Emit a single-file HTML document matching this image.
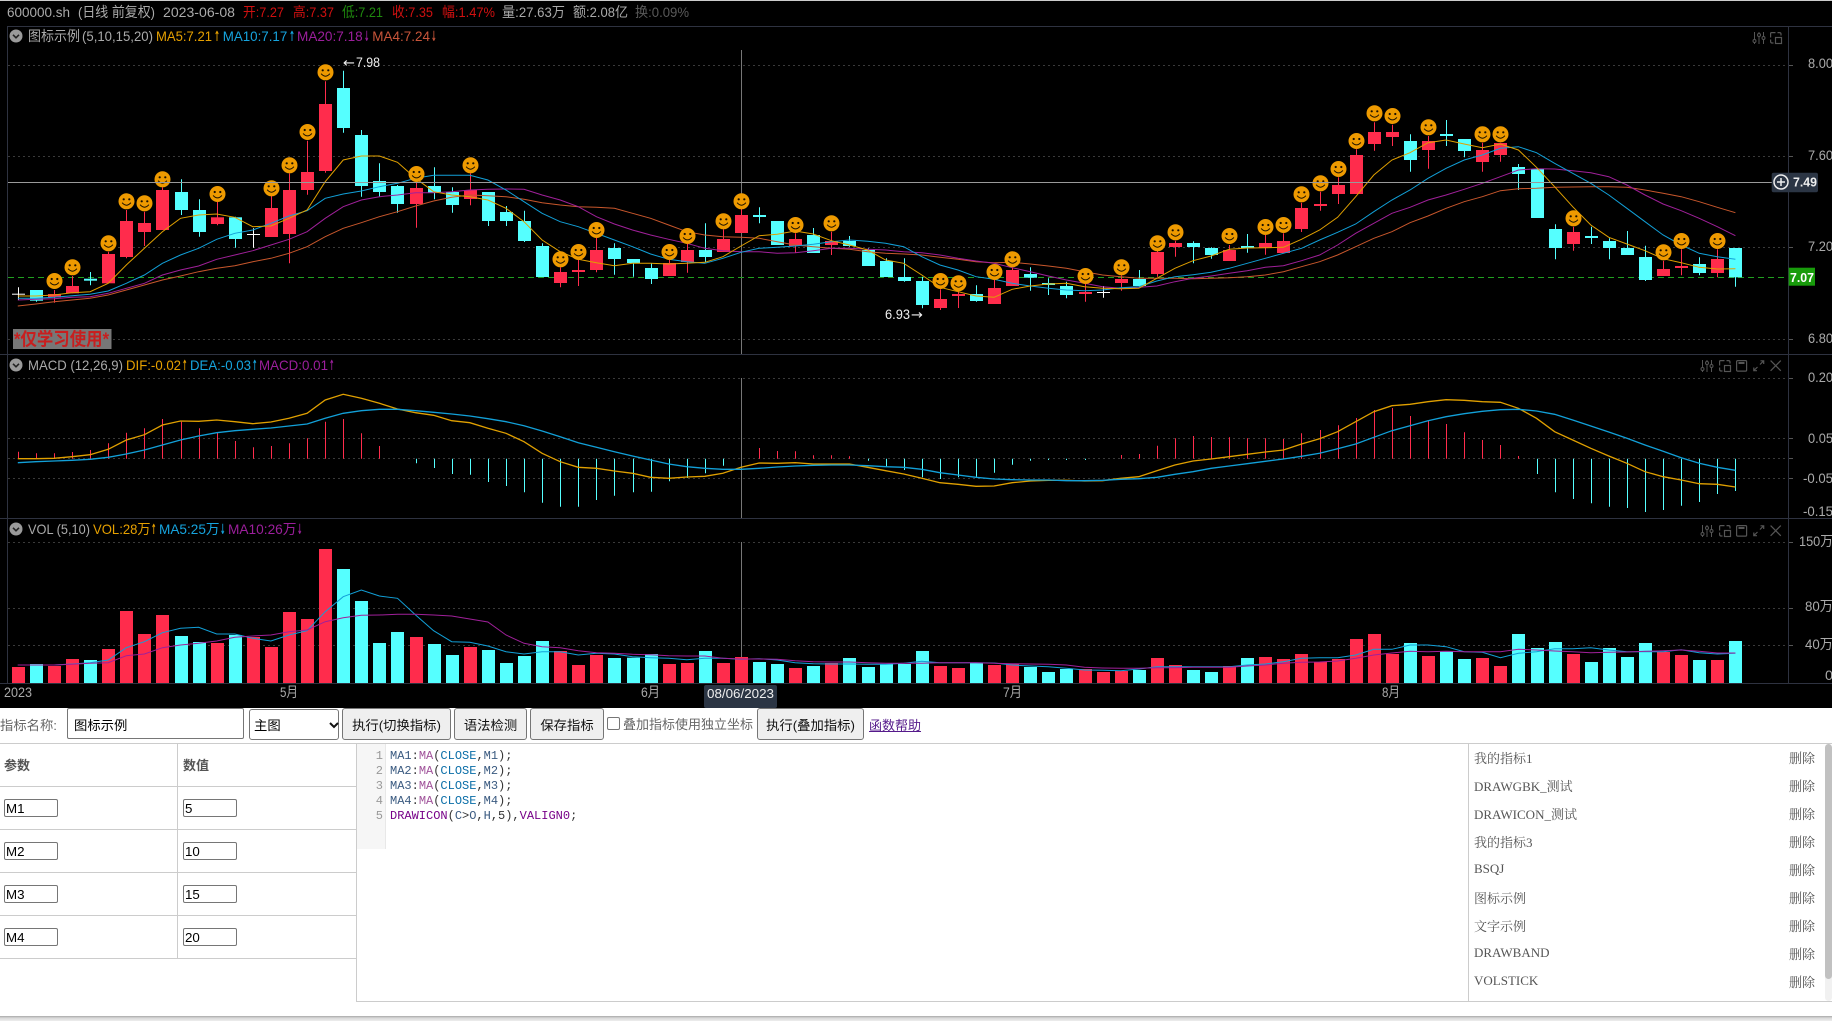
<!DOCTYPE html>
<html lang="zh"><head><meta charset="utf-8"><title>600000.sh</title>
<style>
html,body{margin:0;padding:0;background:#fff}
body{position:relative;width:1832px;height:1021px;overflow:hidden;font-family:"Liberation Sans","Noto Sans CJK SC",sans-serif;font-size:13.33px}
svg#c{position:absolute;left:0;top:0;display:block;background:#000}
svg text{font-family:"Liberation Sans","Noto Sans CJK SC",sans-serif;font-size:14px;fill:#aaa}
svg text.ar{font-family:"DejaVu Sans",sans-serif;font-weight:700;font-size:14px}
.a{position:absolute;box-sizing:border-box;white-space:nowrap}
.l{color:#666;line-height:20px}
button.a{background:#efefef;border:1px solid #767676;border-radius:3px;color:#111;font:13.33px "Liberation Sans","Noto Sans CJK SC",sans-serif;padding:1px 0 0;text-align:center}
input.a{border:1px solid #767676;border-radius:2px;background:#fff;color:#000;font:13.33px "Liberation Sans","Noto Sans CJK SC",sans-serif;padding:0 1px;margin:0;outline:0}
.sel{border:1px solid #767676;border-radius:3px;background:#fff;color:#000;line-height:29px;padding-left:4px}
.hl{background:#ccc;height:1px}
.vl{background:#ccc;width:1px}
.th{color:#555;font-weight:700;font-size:13px;line-height:20px}
.code{font:12px/15px "Liberation Mono",monospace;color:#333;height:15px}
.num{font:12px/15px "Liberation Mono",monospace;color:#999;width:14px;text-align:right}
.v{color:#3a5a80}.f{color:#a0529a}.b{color:#0a6ea8}.p{color:#3f7a5a}.d{color:#708}
.li{font:13px/18px "Liberation Serif","Noto Serif CJK SC",serif;color:#555}
</style></head><body>
<svg id="c" xmlns="http://www.w3.org/2000/svg" width="1832" height="708" viewBox="0 0 1832 708">
<defs>
<g id="i1" fill="none" stroke="#555" stroke-width="1"><path d="M1.5 0v12M6 0v12M10.5 0v12"/><circle cx="1.5" cy="9" r="1.5" fill="#000"/><circle cx="6" cy="3" r="1.5" fill="#000"/><circle cx="10.5" cy="6" r="1.5" fill="#000"/></g>
<g id="i2" fill="none" stroke="#555" stroke-width="1.2"><path d="M5.5 .6H1.6Q.6 .6 .6 1.6V5.5M.6 7.5V9.4Q.6 11 2 11H3.5M7.5 .6H9.4Q11 .6 11 2V3.5"/><rect x="5.5" y="5.5" width="6" height="6"/></g>
<g id="i3" fill="none" stroke="#555" stroke-width="1.2"><rect x=".6" y=".6" width="10" height="10.5" rx="1"/><path d="M2.5 3h6" stroke-width="2"/></g>
<g id="i4" fill="none" stroke="#555" stroke-width="1.2"><path d="M.8 10.6L4.5 7M7 4.5L10.6 .8M7.5 .8h3.2v3.2M.8 7.5v3.2H4"/></g>
<g id="i5" fill="none" stroke="#555" stroke-width="1.2"><path d="M.6 .6L10.8 10.8M10.8 .6L.6 10.8"/></g>
<g id="chev"><circle r="6.5" fill="#9a9a9a"/><path d="M-3-1.2L0 1.8L3-1.2" fill="none" stroke="#222" stroke-width="1.6"/></g>
<g id="sm"><circle r="8" fill="#ee9a00"/><circle cx="-2.8" cy="-2" r="1.1" fill="#1a1000"/><circle cx="2.8" cy="-2" r="1.1" fill="#1a1000"/><path d="M-4.4 1.4Q0 6.4 4.4 1.4" fill="none" stroke="#1a1000" stroke-width="1"/></g>
</defs>
<rect x="0" y="0" width="1832" height="1" fill="#ccc"/>
<g id="grid"></g>
<g id="plot"></g>

<text x="7" y="17" textLength="63" lengthAdjust="spacingAndGlyphs">600000.sh</text>
<text x="78" y="17" textLength="77" lengthAdjust="spacingAndGlyphs">(日线 前复权)</text>
<text x="163" y="17" textLength="72" lengthAdjust="spacingAndGlyphs">2023-06-08</text>
<text x="243" y="17" textLength="41" lengthAdjust="spacingAndGlyphs" style="fill:#d01010">开:7.27</text>
<text x="293" y="17" textLength="41" lengthAdjust="spacingAndGlyphs" style="fill:#d01010">高:7.37</text>
<text x="342" y="17" textLength="41" lengthAdjust="spacingAndGlyphs" style="fill:#1f8a0e">低:7.21</text>
<text x="392" y="17" textLength="41" lengthAdjust="spacingAndGlyphs" style="fill:#d01010">收:7.35</text>
<text x="442" y="17" textLength="53" lengthAdjust="spacingAndGlyphs" style="fill:#d01010">幅:1.47%</text>
<text x="502" y="17" textLength="63" lengthAdjust="spacingAndGlyphs">量:27.63万</text>
<text x="573" y="17" textLength="55" lengthAdjust="spacingAndGlyphs">额:2.08亿</text>
<text x="635" y="17" textLength="54" lengthAdjust="spacingAndGlyphs" style="fill:#5a5a5a">换:0.09%</text>

<use href="#chev" x="16" y="36"/>
<text x="28" y="41" textLength="52" lengthAdjust="spacingAndGlyphs">图标示例</text>
<text x="82" y="41" textLength="71" lengthAdjust="spacingAndGlyphs">(5,10,15,20)</text>
<text x="156" y="41" textLength="56" lengthAdjust="spacingAndGlyphs" style="fill:#e6a000">MA5:7.21</text><text class="ar" x="214" y="41" textLength="6" lengthAdjust="spacingAndGlyphs" style="fill:#e6a000">↑</text>
<text x="222.7" y="41" textLength="64.6" lengthAdjust="spacingAndGlyphs" style="fill:#16a4de">MA10:7.17</text><text class="ar" x="289" y="41" textLength="6" lengthAdjust="spacingAndGlyphs" style="fill:#16a4de">↑</text>
<text x="297" y="41" textLength="65.7" lengthAdjust="spacingAndGlyphs" style="fill:#9c1f9c">MA20:7.18</text><text class="ar" x="364" y="41" textLength="5.5" lengthAdjust="spacingAndGlyphs" style="fill:#9c1f9c">↓</text>
<text x="372.3" y="41" textLength="57.7" lengthAdjust="spacingAndGlyphs" style="fill:#c8553a">MA4:7.24</text><text class="ar" x="431" y="41" textLength="5.7" lengthAdjust="spacingAndGlyphs" style="fill:#c8553a">↓</text>

<use href="#i1" x="1753" y="32"/><use href="#i2" x="1770" y="32"/>
<use href="#i1" x="1701" y="360"/><use href="#i2" x="1719" y="360"/><use href="#i3" x="1736" y="360"/><use href="#i4" x="1753" y="360"/><use href="#i5" x="1770" y="360"/>
<use href="#i1" x="1701" y="525"/><use href="#i2" x="1719" y="525"/><use href="#i3" x="1736" y="525"/><use href="#i4" x="1753" y="525"/><use href="#i5" x="1770" y="525"/>

<text class="ar" x="343" y="67" textLength="12" lengthAdjust="spacingAndGlyphs" style="fill:#eee;font-weight:400;font-size:13px">←</text><text x="356" y="67" textLength="24" lengthAdjust="spacingAndGlyphs" style="fill:#eee;font-size:13.5px">7.98</text>
<text x="885" y="319" textLength="25" lengthAdjust="spacingAndGlyphs" style="fill:#eee;font-size:13.5px">6.93</text><text class="ar" x="911" y="319" textLength="12" lengthAdjust="spacingAndGlyphs" style="fill:#eee;font-weight:400;font-size:13px">→</text>

<rect x="13" y="329" width="98.5" height="20" fill="#777"/>
<text x="14" y="345.5" textLength="95" lengthAdjust="spacingAndGlyphs" style="fill:#c81e1e;font-size:18px;font-weight:700">*仅学习使用*</text>

<use href="#chev" x="16" y="365"/>
<text x="28" y="370" textLength="95" lengthAdjust="spacingAndGlyphs">MACD (12,26,9)</text>
<text x="126" y="370" textLength="55" lengthAdjust="spacingAndGlyphs" style="fill:#e6a000">DIF:-0.02</text><text class="ar" x="182" y="370" textLength="5.5" lengthAdjust="spacingAndGlyphs" style="fill:#e6a000">↑</text>
<text x="190" y="370" textLength="61" lengthAdjust="spacingAndGlyphs" style="fill:#16a4de">DEA:-0.03</text><text class="ar" x="252" y="370" textLength="5.5" lengthAdjust="spacingAndGlyphs" style="fill:#16a4de">↑</text>
<text x="259" y="370" textLength="69" lengthAdjust="spacingAndGlyphs" style="fill:#9c1f9c">MACD:0.01</text><text class="ar" x="329" y="370" textLength="5.5" lengthAdjust="spacingAndGlyphs" style="fill:#9c1f9c">↑</text>

<use href="#chev" x="16" y="529"/>
<text x="28" y="534" textLength="62" lengthAdjust="spacingAndGlyphs">VOL (5,10)</text>
<text x="93" y="534" textLength="57.5" lengthAdjust="spacingAndGlyphs" style="fill:#e6a000">VOL:28万</text><text class="ar" x="151" y="534" textLength="5.5" lengthAdjust="spacingAndGlyphs" style="fill:#e6a000">↑</text>
<text x="159" y="534" textLength="60.5" lengthAdjust="spacingAndGlyphs" style="fill:#16a4de">MA5:25万</text><text class="ar" x="220" y="534" textLength="5.5" lengthAdjust="spacingAndGlyphs" style="fill:#16a4de">↓</text>
<text x="228" y="534" textLength="68.5" lengthAdjust="spacingAndGlyphs" style="fill:#9c1f9c">MA10:26万</text><text class="ar" x="297" y="534" textLength="5.5" lengthAdjust="spacingAndGlyphs" style="fill:#9c1f9c">↓</text>

<text x="1808" y="68" textLength="25" lengthAdjust="spacingAndGlyphs">8.00</text>
<text x="1808" y="160" textLength="25" lengthAdjust="spacingAndGlyphs">7.60</text>
<text x="1808" y="251" textLength="25" lengthAdjust="spacingAndGlyphs">7.20</text>
<text x="1808" y="343" textLength="25" lengthAdjust="spacingAndGlyphs">6.80</text>
<text x="1808" y="382" textLength="25" lengthAdjust="spacingAndGlyphs">0.20</text>
<text x="1808" y="443" textLength="25" lengthAdjust="spacingAndGlyphs">0.05</text>
<text x="1803" y="483" textLength="30" lengthAdjust="spacingAndGlyphs">-0.05</text>
<text x="1803" y="516" textLength="30" lengthAdjust="spacingAndGlyphs">-0.15</text>
<text x="1799" y="546" textLength="34" lengthAdjust="spacingAndGlyphs">150万</text>
<text x="1805" y="611" textLength="28" lengthAdjust="spacingAndGlyphs">80万</text>
<text x="1805" y="649" textLength="28" lengthAdjust="spacingAndGlyphs">40万</text>
<text x="1825" y="680" textLength="8" lengthAdjust="spacingAndGlyphs">0</text>

<rect x="1771.7" y="172.7" width="46.3" height="19.5" rx="2" fill="#2b3544"/>
<circle cx="1781" cy="182" r="7" fill="none" stroke="#eee" stroke-width="1.5"/>
<path d="M1777 182h8M1781 178v8" stroke="#eee" stroke-width="1.5"/>
<text x="1793" y="186.5" textLength="24" lengthAdjust="spacingAndGlyphs" style="fill:#eee;font-weight:700;font-size:13px">7.49</text>
<rect x="1788.7" y="267.7" width="26.3" height="18" fill="#189b0b"/>
<text x="1790" y="282" textLength="24" lengthAdjust="spacingAndGlyphs" style="fill:#fff;font-weight:700;font-size:13px">7.07</text>

<text x="4" y="697" textLength="28" lengthAdjust="spacingAndGlyphs">2023</text>
<text x="280" y="697" textLength="18" lengthAdjust="spacingAndGlyphs">5月</text>
<text x="641" y="697" textLength="19" lengthAdjust="spacingAndGlyphs">6月</text>
<text x="1003" y="697" textLength="19" lengthAdjust="spacingAndGlyphs">7月</text>
<text x="1382" y="697" textLength="18" lengthAdjust="spacingAndGlyphs">8月</text>
<rect x="704" y="685" width="73" height="23" rx="2" fill="#2b3544"/>
<text x="707" y="698" textLength="67" lengthAdjust="spacingAndGlyphs" style="fill:#eee;font-size:13px">08/06/2023</text>
</svg>

<div class="a l" style="left:0;top:716px;width:60px;overflow:hidden">指标名称:</div>
<input class="a" style="left:67px;top:708px;width:177px;height:31px;padding:2px 0 0 6px" value="图标示例">
<div class="a sel" style="left:249px;top:709px;width:90px;height:31px;padding-top:1px">主图<svg style="position:absolute;left:79px;top:12px" width="10" height="7"><path d="M1 1L5 5L9 1" fill="none" stroke="#111" stroke-width="2"/></svg></div>
<button class="a" style="left:342px;top:708px;width:109px;height:32px">执行(切换指标)</button>
<button class="a" style="left:454px;top:708px;width:73px;height:32px">语法检测</button>
<button class="a" style="left:530px;top:708px;width:74px;height:32px">保存指标</button>
<div class="a" style="left:607px;top:717px;width:13px;height:13px;border:1px solid #767676;border-radius:2px;background:#fff"></div>
<div class="a l" style="left:623px;top:715px;width:132px;font-size:13px">叠加指标使用独立坐标</div>
<button class="a" style="left:757px;top:708px;width:107px;height:32px">执行(叠加指标)</button>
<a class="a" style="left:869px;top:716px;line-height:20px;color:#551a8b;text-decoration:underline;font-size:13px">函数帮助</a>

<div class="a hl" style="left:0;top:743px;width:1832px"></div>
<div class="a vl" style="left:177px;top:743px;height:216px"></div>
<div class="a vl" style="left:356px;top:743px;height:259px"></div>
<div class="a hl" style="left:0;top:786px;width:356px"></div>
<div class="a hl" style="left:0;top:829px;width:356px"></div>
<div class="a hl" style="left:0;top:872px;width:356px"></div>
<div class="a hl" style="left:0;top:915px;width:356px"></div>
<div class="a hl" style="left:0;top:958px;width:356px"></div>
<div class="a th" style="left:4px;top:756px">参数</div>
<div class="a th" style="left:183px;top:756px">数值</div>
<input class="a" style="left:4px;top:799px;width:54px;height:18px" value="M1"><input class="a" style="left:183px;top:799px;width:54px;height:18px" value="5">
<input class="a" style="left:4px;top:842px;width:54px;height:18px" value="M2"><input class="a" style="left:183px;top:842px;width:54px;height:18px" value="10">
<input class="a" style="left:4px;top:885px;width:54px;height:18px" value="M3"><input class="a" style="left:183px;top:885px;width:54px;height:18px" value="15">
<input class="a" style="left:4px;top:928px;width:54px;height:18px" value="M4"><input class="a" style="left:183px;top:928px;width:54px;height:18px" value="20">

<div class="a" style="left:357px;top:744px;width:29px;height:105px;background:#f6f6f6;border-right:1px solid #e8e8e8"></div>
<div class="a num" style="left:369px;top:749px">1</div><div class="a num" style="left:369px;top:764px">2</div><div class="a num" style="left:369px;top:779px">3</div><div class="a num" style="left:369px;top:794px">4</div><div class="a num" style="left:369px;top:809px">5</div>
<div class="a code" style="left:390px;top:749px"><span class="v">MA1</span>:<span class="f">MA</span>(<span class="b">CLOSE</span>,<span class="v">M1</span>);</div>
<div class="a code" style="left:390px;top:764px"><span class="v">MA2</span>:<span class="f">MA</span>(<span class="b">CLOSE</span>,<span class="v">M2</span>);</div>
<div class="a code" style="left:390px;top:779px"><span class="v">MA3</span>:<span class="f">MA</span>(<span class="b">CLOSE</span>,<span class="v">M3</span>);</div>
<div class="a code" style="left:390px;top:794px"><span class="v">MA4</span>:<span class="f">MA</span>(<span class="b">CLOSE</span>,<span class="v">M4</span>);</div>
<div class="a code" style="left:390px;top:809px"><span class="d">DRAWICON</span>(<span class="v">C</span>&gt;<span class="v">O</span>,<span class="v">H</span>,5),<span class="d">VALIGN0</span>;</div>

<div class="a vl" style="left:1468px;top:743px;height:259px"></div>
<div class="a hl" style="left:356px;top:1001px;width:1476px"></div>
<div class="a" style="left:1825px;top:744px;width:7px;height:257px;background:#f1f1f1;border-radius:4px"></div>
<div class="a" style="left:1825px;top:744px;width:7px;height:235px;background:#c1c1c1;border-radius:4px"></div>

<div class="a li" style="left:1474px;top:750px">我的指标1</div><div class="a li" style="left:1789px;top:750px">删除</div>
<div class="a li" style="left:1474px;top:778px">DRAWGBK_测试</div><div class="a li" style="left:1789px;top:778px">删除</div>
<div class="a li" style="left:1474px;top:806px">DRAWICON_测试</div><div class="a li" style="left:1789px;top:806px">删除</div>
<div class="a li" style="left:1474px;top:834px">我的指标3</div><div class="a li" style="left:1789px;top:834px">删除</div>
<div class="a li" style="left:1474px;top:860px">BSQJ</div><div class="a li" style="left:1789px;top:862px">删除</div>
<div class="a li" style="left:1474px;top:890px">图标示例</div><div class="a li" style="left:1789px;top:890px">删除</div>
<div class="a li" style="left:1474px;top:918px">文字示例</div><div class="a li" style="left:1789px;top:918px">删除</div>
<div class="a li" style="left:1474px;top:944px">DRAWBAND</div><div class="a li" style="left:1789px;top:946px">删除</div>
<div class="a li" style="left:1474px;top:972px">VOLSTICK</div><div class="a li" style="left:1789px;top:974px">删除</div>

<div class="a" style="left:0;top:1016px;width:1832px;height:5px;background:linear-gradient(#a8a8a8,#d8d8d8 40%,#eee)"></div>

<script>
var C=[
['w',881,883,862,900,0],['c',870,902,870,905,0],['r',882,892,870,908,843],['r',858,880,828,880,802],['c',836,842,816,856,0],['r',762,850,755,850,730],['r',663,771,630,775,604],['r',669,696,635,738,610],['r',570,690,562,690,538],['c',576,630,538,645,0],
['c',630,696,598,710,0],['r',652,672,606,676,582],['c',652,717,650,743,0],['w',702,704,685,743,0],['r',624,711,588,711,565],['r',570,702,520,790,496],['r',516,570,422,584,396],['r',312,513,244,518,217],['c',264,384,212,398,0],['c',405,558,390,590,0],
['c',543,576,490,590,0],['c',558,612,555,638,0],['r',564,612,548,683,522],['c',558,579,502,598,0],['c',576,615,562,638,0],['r',570,597,520,616,496],['c',576,663,576,678,0],['c',636,663,618,678,0],['c',663,723,632,726,0],['c',738,831,730,831,0],
['r',816,849,802,862,778],['r',810,816,780,858,756],['r',750,810,714,817,690],['c',744,777,730,824,0],['c',777,789,777,830,0],['c',804,837,790,852,0],['r',789,828,780,828,756],['r',750,786,732,818,708],['c',750,771,670,786,0],['r',717,756,688,756,664],
['r',645,699,628,699,604],['c',645,651,622,670,0],['c',663,735,663,735,0],['r',717,738,700,758,675],['c',705,759,684,759,0],['r',723,735,695,765,670],['c',723,738,708,740,0],['c',750,798,745,798,0],['c',783,831,775,831,0],['c',831,843,775,845,0],
['c',843,915,830,925,0],['r',897,924,868,930,843],['r',882,888,868,924,850],['c',882,903,856,905,0],['r',864,912,840,912,816],['r',810,858,802,858,778],['c',822,833,802,872,0],['c',849,855,835,885,0],['c',858,885,845,895,0],['r',876,882,852,905,828],
['w',876,878,858,893,0],['r',837,849,826,872,802],['c',837,858,810,862,0],['r',756,822,750,830,730],['r',729,741,722,770,697],['c',729,741,724,790,0],['c',744,765,742,776,0],['r',750,783,735,783,708],['c',738,744,702,758,0],['r',729,744,705,764,681],
['r',723,759,700,759,675],['r',624,687,608,696,583],['r',612,618,575,632,550],['r',555,582,532,612,507],['r',465,582,448,582,423],['r',396,432,367,452,340],['r',396,411,374,438,348],['c',423,480,403,515,0],['r',423,450,408,506,382],['c',402,408,360,438,0],
['c',417,453,417,472,0],['r',450,486,428,515,403],['r',429,465,428,485,403],['c',501,522,492,570,0],['c',507,654,507,654,0],['c',687,744,673,778,0],['r',696,732,680,752,655],['c',708,714,680,732,0],['c',723,744,715,778,0],['c',744,765,693,765,0],
['c',771,840,737,843,0],['r',807,828,782,828,757],['r',798,804,748,826,723],['c',792,819,772,826,0],['r',777,819,748,832,723],['c',744,832,744,860,0]];
var MA5=[888,888,885,878,875,850,795,745,695,655,645,642,652,680,678,655,630,545,480,468,468,487,535,575,585,590,600,625,665,720,755,778,788,797,790,790,792,790,787,770,738,707,703,693,702,722,735,750,780,790,825,862,875,888,892,868,858,852,850,860,865,866,865,835,805,782,768,748,744,743,742,718,690,652,590,525,480,458,428,420,432,443,432,450,502,560,620,675,712,732,752,776,788,802,807,806];
var MA10=[895,895,892,887,883,873,850,825,790,765,745,718,700,690,670,648,632,595,582,573,560,550,535,526,526,526,540,570,605,640,665,680,700,720,740,762,778,785,790,775,757,745,742,738,733,725,720,724,730,740,770,795,810,830,838,850,858,865,870,872,870,863,860,843,830,824,817,805,790,775,760,745,720,697,672,635,600,570,535,505,480,465,445,440,458,490,520,550,585,625,665,705,735,760,770,778];
var MA20=[900,898,896,892,890,880,865,850,825,810,798,778,765,752,735,718,695,655,620,600,590,585,578,578,575,570,568,567,568,585,600,620,650,672,690,705,718,730,745,752,755,755,760,758,752,745,745,748,750,755,758,765,775,783,790,803,815,828,840,850,860,865,862,858,845,835,828,820,812,802,797,782,765,735,700,670,640,622,600,585,568,550,530,510,506,507,512,518,530,555,585,612,632,655,680,707];
var MA4=[918,912,905,900,895,885,870,855,840,828,815,805,797,785,775,760,740,710,685,668,650,635,618,603,592,585,587,590,598,608,615,620,622,625,640,655,675,695,705,710,712,715,725,735,740,745,748,755,760,762,765,772,778,785,788,787,792,798,805,815,825,830,835,835,835,836,835,833,830,825,815,800,785,765,740,715,695,668,648,625,605,590,572,566,565,562,561,560,560,562,570,580,590,605,622,638];
var H=[305,310,310,306,300,280,248,235,207,215,235,248,273,292,288,280,265,215,207,250,288,326,340,354,372,374,396,408,427,458,470,470,450,437,427,425,394,384,370,347,326,294,303,304,316,316,319,332,350,360,382,387,382,380,368,344,332,330,330,330,326,315,312,287,265,258,261,262,265,265,267,250,240,226,204,180,174,198,210,222,247,270,285,318,372,427,447,460,470,474,486,480,467,456,432,423];
var DIF=[326,326,325,320,314,298,270,254,225,213,214,210,215,221,216,205,190,150,133,145,160,177,188,196,212,218,235,250,275,310,335,352,355,363,370,382,385,381,379,370,352,339,340,338,342,342,342,352,362,372,385,398,403,409,408,398,393,391,391,393,392,385,380,362,345,333,327,320,313,306,300,282,266,245,215,185,167,163,155,149,151,155,157,175,205,245,270,295,318,340,365,380,390,401,403,411];
var DEA=[338,335,333,331,328,322,312,300,285,270,258,248,242,238,234,228,222,205,190,182,178,178,182,187,192,198,206,215,227,243,260,278,292,305,318,330,342,350,355,358,358,355,351,348,346,345,345,347,350,352,358,368,375,382,387,389,390,390,392,392,391,388,386,382,373,365,355,348,341,334,327,319,310,296,282,262,242,227,212,200,191,184,179,178,183,193,210,228,246,265,285,304,323,340,352,361];
var V=[951,942,948,927,930,897,783,852,795,858,876,879,855,861,891,786,807,597,657,753,879,846,861,882,915,891,900,939,918,873,903,945,915,924,923,912,942,939,903,939,921,936,942,954,948,939,924,951,942,942,903,948,954,939,945,942,951,966,957,957,966,963,960,924,945,960,966,948,924,921,927,912,936,927,867,852,912,879,918,903,927,924,948,852,894,876,912,936,894,921,879,906,915,930,930,873];
var VC="rcrrcrrrrc"+"crcrrrrrcc"+"ccrccrcccc"+"rrrcccrrcr"+"rccrcrcccc"+"crrcrrcccr"+"rrcrrccrcr"+"rrrrrrrcrc"+"crrcccrccc"+"crrcrc";
var VM5=[945,945,945,942,938,930,893,875,848,835,832,852,852,865,873,855,842,785,740,720,738,745,795,842,875,877,888,905,912,905,905,915,910,912,920,923,925,929,925,925,928,926,930,938,941,942,942,943,943,940,934,938,938,938,939,945,948,950,955,960,961,962,957,950,950,950,950,950,945,942,935,925,923,923,915,898,898,885,885,890,905,907,923,910,905,896,896,893,900,905,905,905,899,908,912,910];
var VM10=[945,945,945,943,940,938,917,912,893,885,880,873,862,858,855,845,840,815,803,796,795,793,793,795,798,807,816,855,880,890,893,902,908,910,913,914,917,918,918,925,927,927,928,932,935,936,936,938,940,940,940,938,938,938,940,941,942,943,945,952,954,955,955,953,953,952,952,952,948,945,940,937,936,933,925,915,909,904,905,904,905,905,905,898,900,903,905,908,907,906,904,902,900,904,909,909];
var RED="#ff2c4c",CY="#55ffff";
function X(i){return 17.8+18.08*i}
function R(x,y,w,h,f){return '<rect x="'+x.toFixed(1)+'" y="'+y.toFixed(1)+'" width="'+w+'" height="'+h.toFixed(1)+'" fill="'+f+'"/>'}
function PL(a,off,col,w){var p=a.map(function(v,i){return X(i).toFixed(1)+','+(off+v/3).toFixed(1)}).join(' ');return '<polyline points="'+p+'" fill="none" stroke="'+col+'" stroke-width="'+w+'"/>'}
function HL(y,x1,x2,col,dash){return '<line x1="'+x1+'" x2="'+x2+'" y1="'+y+'" y2="'+y+'" stroke="'+col+'" stroke-width="1"'+(dash?' stroke-dasharray="'+dash+'"':'')+'/>'}
function VL(x,y1,y2,col){return '<line x1="'+x+'" x2="'+x+'" y1="'+y1+'" y2="'+y2+'" stroke="'+col+'" stroke-width="1"/>'}
var g='';
[65.5,156.5,247.5,339.5,378.5,438.5,458.5,478.5,542.5,608.5,645.5].forEach(function(y){g+=HL(y,8,1788,'#3a3a3a','2 3');g+=HL(y,1788,1793,'#555')});
g+=HL(26.5,7,1832,'#2e3240');g+=HL(354.5,0,1832,'#2e3240');g+=HL(518.5,0,1832,'#2e3240');g+=HL(683.5,0,1832,'#2e3240');
g+=VL(7.5,26,683,'#2e3240');g+=VL(1788.5,26,683,'#2e3240');
document.getElementById('grid').innerHTML=g;
var s='';
s+=VL(741.5,50,354,'#777')+VL(741.5,378,518,'#777')+VL(741.5,542,683,'#777');
s+=HL(277.5,8,1788,'#1fa01f','6 4');
C.forEach(function(c,i){var x=X(i),cx=Math.round(x)+.5,col=c[0]=='r'?RED:c[0]=='c'?CY:'#fff';
 s+=VL(cx,(c[3]/3).toFixed(1),(c[4]/3).toFixed(1),col);
 var h=Math.max((c[2]-c[1])/3,1);
 s+=R(cx-6.5,c[1]/3,13,h,col);
});
s+=PL(MA4,0,'#c8572c',1)+PL(MA20,0,'#a0209a',1)+PL(MA10,0,'#12a0d8',1)+PL(MA5,0,'#e0a000',1);
C.forEach(function(c,i){if(c[5])s+='<use href="#sm" x="'+(Math.round(X(i))+.5)+'" y="'+(c[5]/3).toFixed(1)+'"/>'});
H.forEach(function(v,i){if(v==326)return;var cx=Math.round(X(i))+.5,y=350+v/3;s+=VL(cx,y.toFixed(1),458.7,v<326?RED:CY)});
s+=PL(DIF,350,'#e0a000',1.3)+PL(DEA,350,'#12a0d8',1.3);
V.forEach(function(v,i){var cx=Math.round(X(i))+.5,y=350+v/3;s+=R(cx-6.5,y,13,683-y,VC[i]=='r'?RED:CY)});
s+=PL(VM5,350,'#12a0d8',1)+PL(VM10,350,'#a0209a',1);
s+=HL(182.5,8,1772,'#9a9a9a');
document.getElementById('plot').innerHTML=s;
</script>
</body></html>
